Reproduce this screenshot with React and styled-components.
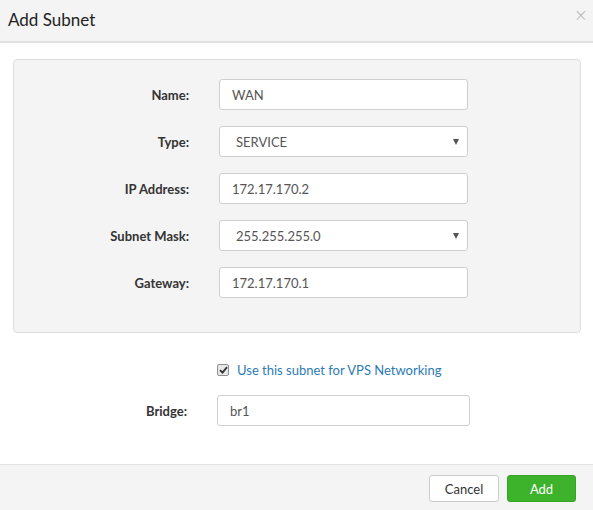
import React, { useState } from "react";
import styled, { createGlobalStyle } from "styled-components";

const GlobalStyle = createGlobalStyle`
  html, body { margin: 0; padding: 0; background: #fff; }
  body { font-family: Lato, "Open Sans", sans-serif; font-size: 13px; color: #333; }
  * { box-sizing: border-box; }
`;

const Modal = styled.div`
  width: 593px;
  height: 510px;
  display: flex;
  flex-direction: column;
  background: #fff;
`;

const Header = styled.div`
  height: 43px;
  background: #f4f4f4;
  border-bottom: 2px solid #e2e2e2;
  display: flex;
  align-items: center;
  justify-content: space-between;
  padding: 0 8px 2px 8px;
`;

const Title = styled.h4`
  margin: 0;
  font-size: 17px;
  font-weight: 400;
  color: #222;
`;

const Close = styled.span`
  font-size: 17px;
  color: #b5b5b5;
  margin-top: -10px;
  margin-right: -3px;
  font-family: "DejaVu Sans", sans-serif;
  font-weight: 300;
`;

const Body = styled.div`
  flex: 1;
  padding: 16px 12px 0 13px;
`;

const Panel = styled.div`
  background: #f4f4f4;
  border: 1px solid #dedede;
  border-radius: 4px;
  padding: 19px 0 34px 0;
  display: grid;
  grid-template-columns: 175px 249px;
  column-gap: 30px;
  row-gap: 16px;
  align-items: center;
`;

const Label = styled.label`
  text-align: right;
  font-weight: 700;
  font-size: 13px;
  color: #333;
`;

const Input = styled.input`
  height: 31px;
  width: ${(p) => p.$width || 249}px;
  border: 1px solid #cfcfcf;
  border-radius: 3px;
  background: #fff;
  padding: 0 12px;
  font-family: Lato, sans-serif;
  font-size: 13px;
  color: #555;
  outline: none;
`;

const SelectBox = styled.div`
  height: 31px;
  border: 1px solid #cfcfcf;
  border-radius: 3px;
  background: #fff;
  padding: 0 8px 0 16px;
  display: flex;
  align-items: center;
  justify-content: space-between;
  color: #555;
`;

const Caret = styled.span`
  width: 0;
  height: 0;
  border-left: 3.5px solid transparent;
  border-right: 3.5px solid transparent;
  border-top: 6px solid #555;
  margin-top: 1px;
`;

const Extra = styled.div`
  display: grid;
  grid-template-columns: 174px 253px;
  column-gap: 30px;
  row-gap: 17px;
  align-items: center;
  padding-top: 29px;
`;

const CheckRow = styled.label`
  grid-column: 2;
  display: flex;
  align-items: center;
  gap: 8px;
  color: #2c7bb5;
  font-size: 13px;
`;

const Box = styled.span`
  width: 12px;
  height: 12px;
  border: 1px solid #8f8f8f;
  border-radius: 2px;
  background: #e8e8e8;
  display: flex;
  align-items: center;
  justify-content: center;
`;

const Footer = styled.div`
  height: 46px;
  background: #f4f4f4;
  border-top: 1px solid #e2e2e2;
  display: flex;
  justify-content: flex-end;
  align-items: flex-start;
  gap: 8px;
  padding: 10px 17px 0 0;
`;

const Button = styled.button`
  height: 27px;
  width: ${(p) => (p.$primary ? 69 : 70)}px;
  border-radius: 3px;
  font-family: Lato, sans-serif;
  font-size: 13px;
  cursor: pointer;
  border: 1px solid ${(p) => (p.$primary ? "#36a324" : "#cccccc")};
  background: ${(p) => (p.$primary ? "#3db22b" : "#fff")};
  color: ${(p) => (p.$primary ? "#fff" : "#333")};
`;

const Select = ({ value }) => (
  <SelectBox>
    <span>{value}</span>
    <Caret />
  </SelectBox>
);

export default function App() {
  const [name, setName] = useState("WAN");
  const [ip, setIp] = useState("172.17.170.2");
  const [gw, setGw] = useState("172.17.170.1");
  const [bridge, setBridge] = useState("br1");

  return (
    <Modal>
      <GlobalStyle />
      <Header>
        <Title>Add Subnet</Title>
        <Close>×</Close>
      </Header>
      <Body>
        <Panel>
          <Label>Name:</Label>
          <Input value={name} onChange={(e) => setName(e.target.value)} />
          <Label>Type:</Label>
          <Select value="SERVICE" />
          <Label>IP Address:</Label>
          <Input value={ip} onChange={(e) => setIp(e.target.value)} />
          <Label>Subnet Mask:</Label>
          <Select value="255.255.255.0" />
          <Label>Gateway:</Label>
          <Input value={gw} onChange={(e) => setGw(e.target.value)} />
        </Panel>
        <Extra>
          <CheckRow>
            <Box>
              <svg width="9" height="8" viewBox="0 0 9 8">
                <path d="M1 4.2 L3.5 6.6 L8 1.2" fill="none" stroke="#333" strokeWidth="1.8" />
              </svg>
            </Box>
            Use this subnet for VPS Networking
          </CheckRow>
          <Label>Bridge:</Label>
          <Input $width={253} value={bridge} onChange={(e) => setBridge(e.target.value)} />
        </Extra>
      </Body>
      <Footer>
        <Button>Cancel</Button>
        <Button $primary>Add</Button>
      </Footer>
    </Modal>
  );
}
